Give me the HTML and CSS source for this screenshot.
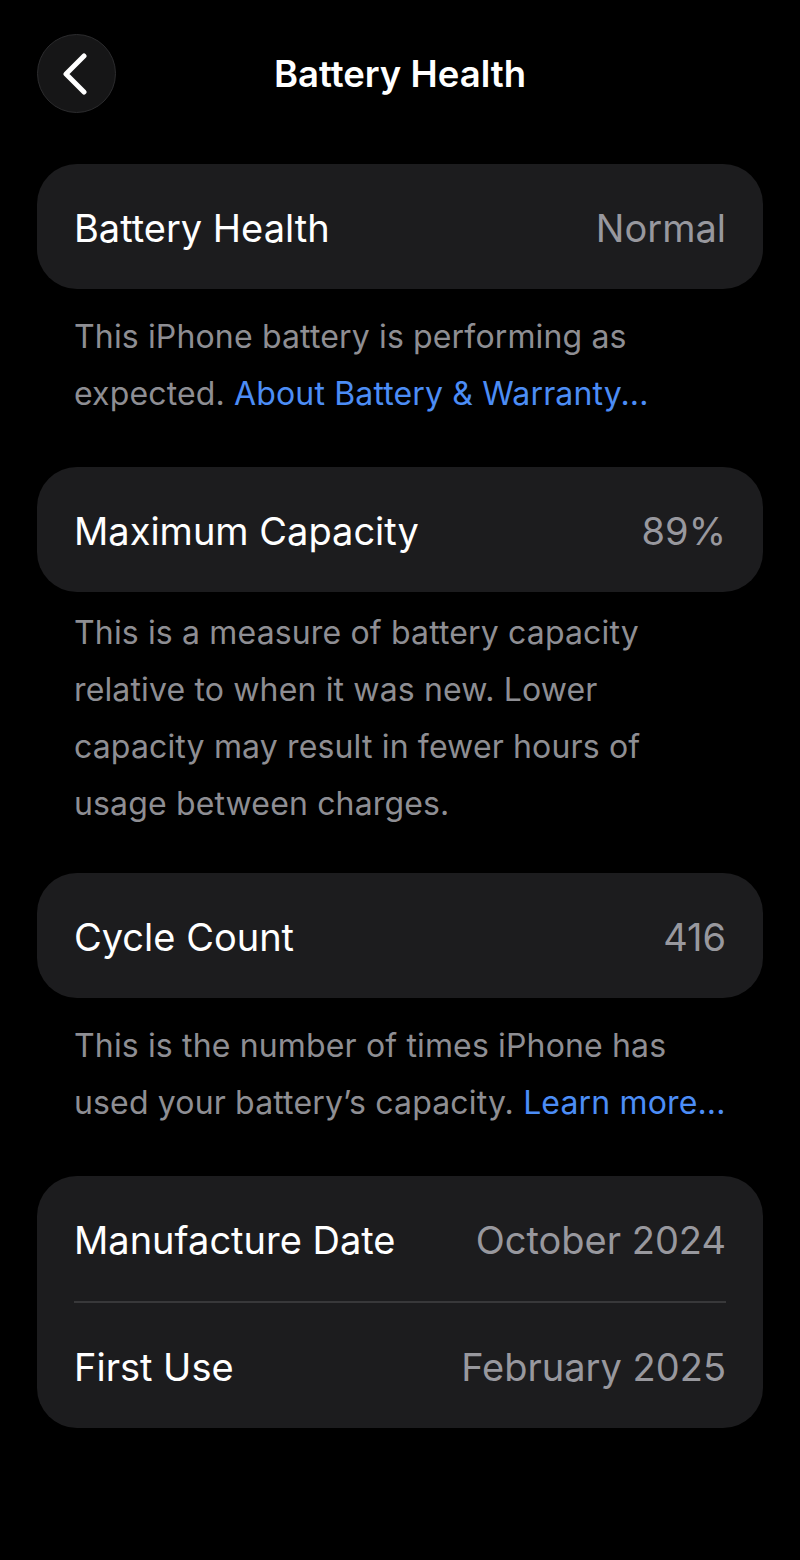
FILE: index.html
```html
<!DOCTYPE html>
<html lang="en">
<head>
<meta charset="utf-8">
<title>Battery Health</title>
<link rel="stylesheet" href="styles.css">
</head>
<body>
<div class="screen">
  <header class="nav">
    <button class="back" aria-label="Back">
      <svg width="30" height="42" viewBox="0 0 30 42"><path d="M24 3 L6 21 L24 39" fill="none" stroke="#fff" stroke-width="5" stroke-linecap="round" stroke-linejoin="round"/></svg>
    </button>
    <h1 class="title">Battery Health</h1>
  </header>

  <section class="group">
    <div class="card">
      <div class="row"><span class="label">Battery Health</span><span class="value">Normal</span></div>
    </div>
    <p class="footer">This iPhone battery is performing as expected. <span class="link">About Battery &amp; Warranty...</span></p>
  </section>

  <section class="group group-tight">
    <div class="card">
      <div class="row"><span class="label">Maximum Capacity</span><span class="value">89%</span></div>
    </div>
    <p class="footer">This is a measure of battery capacity relative to when it was new. Lower capacity may result in fewer hours of usage between charges.</p>
  </section>

  <section class="group">
    <div class="card">
      <div class="row"><span class="label">Cycle Count</span><span class="value">416</span></div>
    </div>
    <p class="footer">This is the number of times iPhone has used your battery’s capacity. <span class="link">Learn more...</span></p>
  </section>

  <section class="group">
    <div class="card">
      <div class="row"><span class="label">Manufacture Date</span><span class="value">October 2024</span></div>
      <div class="divider"></div>
      <div class="row"><span class="label">First Use</span><span class="value">February 2025</span></div>
    </div>
  </section>
</div>
</body>
</html>
```

FILE: styles.css
```css
html, body {
  margin: 0;
  padding: 0;
  background: #000;
}
body {
  font-family: Inter, "Noto Sans", "Liberation Sans", sans-serif;
  color: #fff;
  width: 800px;
  height: 1560px;
  overflow: hidden;
}
.screen {
  padding: 34px 37px 0 37px;
}
.nav {
  position: relative;
  height: 79px;
  display: flex;
  align-items: center;
  justify-content: center;
  margin-bottom: 51px;
}
.back {
  position: absolute;
  left: 0;
  top: 0;
  width: 79px;
  height: 79px;
  border-radius: 50%;
  background: #161617;
  border: 1.5px solid #2c2c2e;
  box-sizing: border-box;
  display: flex;
  align-items: center;
  justify-content: center;
  padding: 0 4px 0 0;
}
.title {
  margin: 0;
  font-size: 36.5px;
  font-weight: 600;
  letter-spacing: 0;
  margin-top: 1px;
}
.group {
  margin-bottom: 45px;
}
.group-tight {
  margin-bottom: 41px;
}
.group-tight .footer {
  padding-top: 12px;
}
.card {
  background: #1c1c1e;
  border-radius: 40px;
  padding: 0 37px;
}
.row {
  height: 125px;
  display: flex;
  align-items: center;
  justify-content: space-between;
  font-size: 38px;
  letter-spacing: 0;
  padding-top: 3px;
  box-sizing: border-box;
}
.label {
  color: #fff;
}
.value {
  color: #98989e;
}
.divider {
  height: 1.5px;
  background: #38383a;
}
.footer {
  margin: 0;
  padding: 19px 36px 0 37px;
  font-size: 32px;
  line-height: 57px;
  color: #8e8e93;
  letter-spacing: 0.15px;
}
.link {
  color: #4c8df6;
}
```
